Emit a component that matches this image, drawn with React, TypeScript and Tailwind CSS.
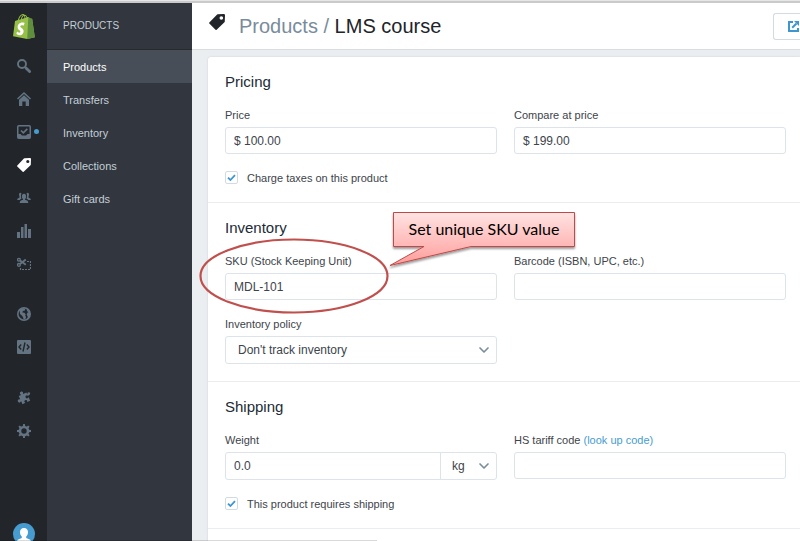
import React from "react";
import { ChevronDown } from "lucide-react";

type IconProps = { className?: string };

function ShopifyLogo() {
  return (
    <svg viewBox="0 0 256 292" className="h-[25px] w-[22px]" aria-hidden="true">
      <path
        fill="#95BF46"
        d="M223.774 57.34c-.201-1.46-1.48-2.268-2.537-2.357-1.055-.088-23.383-1.743-23.383-1.743s-15.507-15.395-17.209-17.099c-1.703-1.703-5.029-1.185-6.32-.805-.19.056-3.388 1.043-8.678 2.68-5.18-14.906-14.322-28.604-30.405-28.604-.444 0-.901.018-1.358.044C129.31 3.407 123.644.779 118.75.779c-37.465 0-55.364 46.835-60.976 70.635-14.558 4.511-24.9 7.718-26.221 8.133-8.126 2.549-8.383 2.805-9.45 10.462C21.3 95.806.038 260.235.038 260.235l165.678 31.042 89.77-19.42S223.973 58.8 223.775 57.34zM156.49 40.848l-14.019 4.339c.005-.988.01-1.96.01-3.023 0-9.264-1.286-16.723-3.349-22.636 8.287 1.04 13.806 10.469 17.358 21.32zm-27.638-19.483c2.304 5.773 3.802 14.058 3.802 25.238 0 .572-.005 1.095-.01 1.624-9.117 2.824-19.024 5.89-28.953 8.966 5.575-21.516 16.025-31.908 25.161-35.828zm-11.131-10.537c1.617 0 3.246.549 4.805 1.622-12.007 5.65-24.877 19.88-30.312 48.297l-22.886 7.088C75.694 46.16 90.81 10.828 117.72 10.828z"
      />
      <path
        fill="#5E8E3E"
        d="M221.237 54.983c-1.055-.088-23.383-1.743-23.383-1.743s-15.507-15.395-17.209-17.099c-.637-.634-1.496-.959-2.394-1.099l-12.527 256.233 89.762-19.418S223.972 58.8 223.774 57.34c-.201-1.46-1.48-2.268-2.537-2.357"
      />
      <path
        fill="#FFF"
        d="M135.242 104.585l-11.069 32.926s-9.698-5.176-21.586-5.176c-17.428 0-18.305 10.937-18.305 13.693 0 15.038 39.2 20.8 39.2 56.024 0 27.713-17.577 45.558-41.277 45.558-28.44 0-42.984-17.7-42.984-17.7l7.615-25.16s14.95 12.835 27.565 12.835c8.243 0 11.596-6.49 11.596-11.232 0-19.616-32.16-20.491-32.16-52.724 0-27.129 19.472-53.382 58.778-53.382 15.145 0 22.627 4.338 22.627 4.338"
      />
    </svg>
  );
}

function SearchIcon({ className }: IconProps) {
  return (
    <svg viewBox="0 0 14 14" className={className} fill="none" stroke="currentColor" aria-hidden="true">
      <circle cx="5" cy="5" r="4" strokeWidth="1.900" />
      <path d="M8 8 9.200 9.200" strokeWidth="1.900" />
      <path d="M9.200 9.200 12.600 12.600" strokeWidth="2.800" strokeLinecap="round" />
    </svg>
  );
}

function HomeIcon({ className }: IconProps) {
  return (
    <svg viewBox="0 0 14 14" className={className} fill="currentColor" aria-hidden="true">
      <path d="M7 0 14 6.400 13 7.400 7 2 1 7.400 0 6.400z" />
      <path d="M7 3.200 12 7.700V14H8.700V9.600H5.300V14H2V7.700z" />
    </svg>
  );
}

function OrdersIcon({ className }: IconProps) {
  return (
    <svg viewBox="0 0 14 14" className={className} aria-hidden="true">
      <rect x="0.75" y="0.75" width="12.5" height="12.5" rx="1" fill="none" stroke="currentColor" strokeWidth="1.5" />
      <path d="M1 9h2.500l1.500 1.500h4l1.500-1.500H13v4H1z" fill="currentColor" />
      <path d="M4 5.500 6.300 7.800 10.300 3.800" fill="none" stroke="currentColor" strokeWidth="1.700" />
    </svg>
  );
}

function TagIcon({ className }: IconProps) {
  return (
    <svg viewBox="0 0 14 14" className={className} fill="currentColor" aria-hidden="true">
      <path
        fillRule="evenodd"
        d="M7.600.300 13 0q1 0 1 1l-.200 5.600q0 .400-.300.700L6.700 13.700q-.500.500-1 0L.300 8.400q-.500-.500 0-1L6.900.600Q7.200.300 7.600.300zM10.800 1.900a1.600 1.600 0 1 0 0 3.200 1.600 1.600 0 1 0 0-3.200z"
      />
    </svg>
  );
}

function PeopleIcon({ className }: IconProps) {
  return (
    <svg viewBox="0 0 14 14" className={className} fill="currentColor" aria-hidden="true">
      <ellipse cx="7" cy="5.600" rx="2.100" ry="2.800" />
      <path d="M6 7h2v1.700q3.300.600 3.300 3.300H2.700q0-2.700 3.300-3.300z" />
      <path d="M4.500 2.200Q3 1.300 2.200 2.500 1.700 4 2.500 5.500v1Q.300 7 0 9h2.800q.700-1 2-1.400-.700-.400-.700-.900Q3.300 4.300 4.500 2.200z" />
      <path d="M9.500 2.200Q11 1.300 11.800 2.500q.500 1.500-.300 3v1Q13.700 7 14 9h-2.800q-.700-1-2-1.400.700-.400.700-.900.800-2.400-.400-4.500z" />
    </svg>
  );
}

function ReportsIcon({ className }: IconProps) {
  return (
    <svg viewBox="0 0 14 14" className={className} fill="currentColor" aria-hidden="true">
      <path d="M0 8h3v6H0zM4 3h2.500v11H4zM7.500 0H10v14H7.500zM11 5h3v9h-3z" />
    </svg>
  );
}

function DiscountIcon({ className }: IconProps) {
  return (
    <svg viewBox="0 0 14 14" className={className} fill="none" stroke="currentColor" aria-hidden="true">
      <circle cx="1.900" cy="2.700" r="1.400" strokeWidth="1.300" />
      <circle cx="1.900" cy="7.900" r="1.400" strokeWidth="1.300" />
      <path d="M3 3.600 8.800 7.800M3 7 8.800 2.600" strokeWidth="1.900" />
      <path d="M10 4.500h3.500V12.500H3.500V10" strokeWidth="1.200" strokeDasharray="2 1" />
    </svg>
  );
}

function GlobeIcon({ className }: IconProps) {
  return (
    <svg viewBox="0 0 14 14" className={className} aria-hidden="true">
      <circle cx="7" cy="7" r="6.200" fill="none" stroke="currentColor" strokeWidth="1.600" />
      <path
        fill="currentColor"
        d="M2.500 2.500 6 1l2.300.700-.400 1.800-2 .500-.500 1.500 1.900.300 1.400 1.500-.500 1.500.900 1.200-.800 2.200-1.800.300-.400-2.300L4.800 8.500 3 7l-.200-2zM9.700 2l2.500 2.500 1 3-1 3-1.800 1.500.300-2.500-1-1.700.600-2 1.200-.500L10 4z"
      />
    </svg>
  );
}

function CodeIcon({ className }: IconProps) {
  return (
    <svg viewBox="0 0 14 14" className={className} aria-hidden="true">
      <rect width="14" height="14" rx="1" fill="currentColor" />
      <path d="M4.200 4.500 2 7l2.200 2.500M9.800 4.500 12 7 9.800 9.500M8 2.500 6 11.500" fill="none" stroke="#22262a" strokeWidth="1.400" />
    </svg>
  );
}

function PuzzleIcon({ className }: IconProps) {
  return (
    <svg viewBox="0 0 14 14" className={className} fill="currentColor" aria-hidden="true">
      <path
        transform="rotate(-25 7 7)"
        d="M3 3h2.700C4.500.900 5.500 0 6.800 0S9.100.900 7.900 3H11.500V6C9.500 5 8.800 6 8.800 7.200S9.500 9.400 11.500 8.400V12H8.200C9.200 10.200 8.400 9.500 7.200 9.500S5.200 10.200 6.200 12H3V8.800C.900 10 0 9 0 7.700S.900 5.400 3 6.600z"
      />
      <circle cx="11.800" cy="2.600" r="1.300" />
      <path d="M9.500 3.500 11.500 2l1 1.500L11 5z" />
    </svg>
  );
}

const gearTeeth = [0, 45, 90, 135, 180, 225, 270, 315];

function GearIcon({ className }: IconProps) {
  return (
    <svg viewBox="0 0 14 14" className={className} fill="currentColor" aria-hidden="true">
      <circle cx="7" cy="7" r="4" fill="none" stroke="currentColor" strokeWidth="2.600" />
      {gearTeeth.map((angle) => (
        <path key={angle} d="M5.800 2.500 6.100 0h1.800l.300 2.500z" transform={`rotate(${angle} 7 7)`} />
      ))}
    </svg>
  );
}

function ExternalIcon({ className }: IconProps) {
  return (
    <svg viewBox="0 0 11 11" className={className} fill="none" stroke="currentColor" aria-hidden="true">
      <path d="M5 1H1v9h9V7" strokeWidth="2" />
      <path d="M4.200 6.800 8.500 2.500" strokeWidth="2" />
      <path d="M6 0h5v5z" fill="currentColor" stroke="none" />
    </svg>
  );
}

function AvatarIcon() {
  return (
    <svg viewBox="0 0 22 22" className="size-[22px]" aria-hidden="true">
      <circle cx="11" cy="11" r="11" fill="#479ccf" />
      <path
        fill="#fff"
        d="M11 5c2.600 0 4 1.700 4 4.200 0 1.800-.700 3.300-1.800 4.200v1.500l3.600 1.700c.700.400 1 1 1 1.800A10 10 0 0 1 11 21a10 10 0 0 1-6.800-2.600c0-.800.300-1.400 1-1.800l3.600-1.700v-1.500C7.700 12.500 7 11 7 9.200 7 6.700 8.400 5 11 5z"
      />
    </svg>
  );
}

function RailLink({ label, active, dot, children }: { label: string; active?: boolean; dot?: boolean; children: React.ReactNode }) {
  return (
    <a
      href="#"
      aria-label={label}
      className={`relative flex items-center justify-center ${active ? "text-white" : "text-[#637382]"}`}
    >
      {children}
      {dot && <span className="absolute right-2 size-[5px] rounded-full bg-[#479ccf]" />}
    </a>
  );
}

const controlClass =
  "w-full rounded-[3px] border border-[#dce3ea] bg-white px-2 text-xs text-[#3d444b] outline-none";

function Field({ id, label, value, hint }: { id: string; label: string; value?: string; hint?: React.ReactNode }) {
  return (
    <div className="min-w-0 space-y-1">
      <div className="h-4">
        <label htmlFor={id}>{label}</label>
        {hint}
      </div>
      <input id={id} type="text" defaultValue={value} className={`block h-[27px] ${controlClass}`} />
    </div>
  );
}

function Checkbox({ id, label }: { id: string; label: string }) {
  return (
    <div className="mt-4 flex h-[15px] items-center gap-[9px]">
      <span className="relative size-[13px]">
        <input
          id={id}
          type="checkbox"
          defaultChecked
          className="peer block size-[13px] appearance-none rounded-[2px] border border-[#d3dbe2] bg-white"
        />
        <svg
          viewBox="0 0 13 13"
          className="pointer-events-none absolute inset-0 hidden size-[13px] peer-checked:block"
          fill="none"
          stroke="#3d96cf"
          strokeWidth="1.800"
          aria-hidden="true"
        >
          <path d="M3 6.700 5.400 9 10 4.200" />
        </svg>
      </span>
      <label htmlFor={id}>{label}</label>
    </div>
  );
}

function Section({ title, children }: { title: string; children: React.ReactNode }) {
  return (
    <section className="relative border-b border-[#ebeef0] pt-[15px] pr-[14px] pb-[17px] pl-[17px]">
      <h2 className="mb-[15px] text-[15px] leading-5 text-[#212b36]">{title}</h2>
      {children}
    </section>
  );
}

function SelectArrow() {
  return (
    <ChevronDown
      strokeWidth={2.5}
      className="pointer-events-none absolute top-[6px] right-[5px] size-4 text-[#798c9c]"
    />
  );
}

function SkuCallout() {
  return (
    <div className="pointer-events-none absolute top-0 -left-3 h-[118px] w-[384px]">
      <svg viewBox="0 0 384 118" className="size-full overflow-visible" aria-hidden="true">
        <defs>
          <linearGradient id="callout-fill" x1="0" y1="9" x2="0" y2="63" gradientUnits="userSpaceOnUse">
            <stop offset="0" stopColor="#ffe4e3" />
            <stop offset="1" stopColor="#ff9c9a" />
          </linearGradient>
          <filter id="callout-shadow" x="-10%" y="-10%" width="120%" height="140%">
            <feDropShadow dx="0" dy="2" stdDeviation="1.2" floodColor="#000" floodOpacity="0.4" />
          </filter>
        </defs>
        <ellipse cx="98" cy="73" rx="93.500" ry="36.500" fill="none" stroke="#c0504d" strokeWidth="2.200" />
        <path
          d="M197.500 9.500H378.500V43.500H275L194 62.500 228 43.500H197.500z"
          fill="url(#callout-fill)"
          stroke="#be4b48"
          filter="url(#callout-shadow)"
        />
      </svg>
      <p className="absolute top-[10px] right-[6px] w-[180px] text-center font-[Lato,sans-serif] text-base leading-8 text-black">
        Set unique SKU value
      </p>
    </div>
  );
}

const navItems = ["Products", "Transfers", "Inventory", "Collections", "Gift cards"];

export default function App() {
  return (
    <div className="relative flex h-screen flex-col overflow-hidden bg-[#ebeef0] font-['Liberation_Sans',Arial,sans-serif] text-[11px] leading-4 text-[#3d444b]">
      <div className="h-[3px] shrink-0 border-b-2 border-[#cacaca] bg-[#e6e6e6]" />
      <div className="flex min-h-0 flex-1">
        <nav aria-label="Main" className="flex w-[47px] shrink-0 flex-col bg-[#22262a]">
          <a href="#" aria-label="Dashboard" className="flex h-[46px] shrink-0 items-center justify-center">
            <ShopifyLogo />
          </a>
          <div className="grid h-[231px] shrink-0 grid-rows-7">
            <RailLink label="Search"><SearchIcon className="size-[14px]" /></RailLink>
            <RailLink label="Home"><HomeIcon className="size-[14px]" /></RailLink>
            <RailLink label="Orders" dot><OrdersIcon className="size-[14px]" /></RailLink>
            <RailLink label="Products" active><TagIcon className="size-[14px]" /></RailLink>
            <RailLink label="Customers"><PeopleIcon className="size-[14px]" /></RailLink>
            <RailLink label="Reports"><ReportsIcon className="size-[14px]" /></RailLink>
            <RailLink label="Discounts"><DiscountIcon className="size-[14px]" /></RailLink>
          </div>
          <div className="mt-[17px] grid h-[67px] shrink-0 grid-rows-2">
            <RailLink label="Online store"><GlobeIcon className="size-[14px]" /></RailLink>
            <RailLink label="Embedded code"><CodeIcon className="size-[14px]" /></RailLink>
          </div>
          <div className="mt-[17px] grid h-[67px] shrink-0 grid-rows-2">
            <RailLink label="Apps"><PuzzleIcon className="size-[14px]" /></RailLink>
            <RailLink label="Settings"><GearIcon className="size-[14px]" /></RailLink>
          </div>
          <a href="#" aria-label="Account" className="mt-auto -mb-1 flex shrink-0 justify-center">
            <AvatarIcon />
          </a>
        </nav>

        <nav aria-label="Products" className="w-[145px] shrink-0 bg-[#32363e] text-[#c3cfd8]">
          <h2 className="flex h-[47px] items-center border-b border-[#26292e] pl-4 text-[10px]">PRODUCTS</h2>
          <ul className="grid h-[165px] grid-rows-5">
            {navItems.map((item, i) => (
              <li key={item} className="flex">
                <a
                  href="#"
                  className={`flex flex-1 items-center pl-4 ${i === 0 ? "bg-[#474e57] text-white" : ""}`}
                >
                  {item}
                </a>
              </li>
            ))}
          </ul>
        </nav>

        <main className="flex min-w-0 flex-1 flex-col">
          <header className="flex h-[47px] shrink-0 items-center justify-between border-b border-[#d9dde0] bg-white pl-[17px]">
            <div className="flex items-start gap-[14px]">
              <TagIcon className="size-4 text-[#212429]" />
              <h1 className="text-xl leading-6 text-[#212429]">
                <a href="#" className="text-[#798c9c]">Products</a>
                <span className="text-[#798c9c]"> / </span>
                LMS course
              </h1>
            </div>
            <button
              type="button"
              aria-label="View"
              className="flex h-[27px] w-[27px] items-center rounded-l-[3px] border border-r-0 border-[#d3dbe2] bg-white pl-[14px] text-[#3d96cf]"
            >
              <ExternalIcon className="size-[11px] shrink-0" />
            </button>
          </header>

          <form className="mt-[7px] ml-4 flex-1 rounded-tl-[3px] bg-white shadow-[0_0_2px_#c4cdd5]">
            <Section title="Pricing">
              <div className="grid grid-cols-2 gap-x-[17px]">
                <Field id="price" label="Price" value="$ 100.00" />
                <Field id="compare" label="Compare at price" value="$ 199.00" />
              </div>
              <Checkbox id="taxes" label="Charge taxes on this product" />
            </Section>

            <Section title="Inventory">
              <div className="grid grid-cols-2 gap-x-[17px] gap-y-4">
                <Field id="sku" label="SKU (Stock Keeping Unit)" value="MDL-101" />
                <Field id="barcode" label="Barcode (ISBN, UPC, etc.)" />
                <div className="space-y-1">
                  <label htmlFor="policy" className="block">Inventory policy</label>
                  <div className="relative">
                    <select id="policy" className={`block h-7 appearance-none pl-3! ${controlClass}`}>
                      <option>Don't track inventory</option>
                    </select>
                    <SelectArrow />
                  </div>
                </div>
              </div>
              <SkuCallout />
            </Section>

            <Section title="Shipping">
              <div className="grid grid-cols-2 gap-x-[17px]">
                <div className="space-y-1">
                  <label htmlFor="weight" className="block">Weight</label>
                  <div className="flex">
                    <input id="weight" type="text" defaultValue="0.0" className={`h-7 min-w-0 flex-1 rounded-r-none! ${controlClass}`} />
                    <div className="relative -ml-px w-[57px] shrink-0">
                      <select aria-label="Weight unit" className={`block h-7 appearance-none rounded-l-none! pl-[11px]! ${controlClass}`}>
                        <option>kg</option>
                      </select>
                      <SelectArrow />
                    </div>
                  </div>
                </div>
                <Field
                  id="tariff"
                  label="HS tariff code"
                  hint={<a href="#" className="text-[#479ccf]"> (look up code)</a>}
                />
              </div>
              <Checkbox id="requires-shipping" label="This product requires shipping" />
            </Section>
          </form>
        </main>
      </div>
      <div className="absolute bottom-0 left-0 h-px w-[377px] bg-black/15" />
    </div>
  );
}
